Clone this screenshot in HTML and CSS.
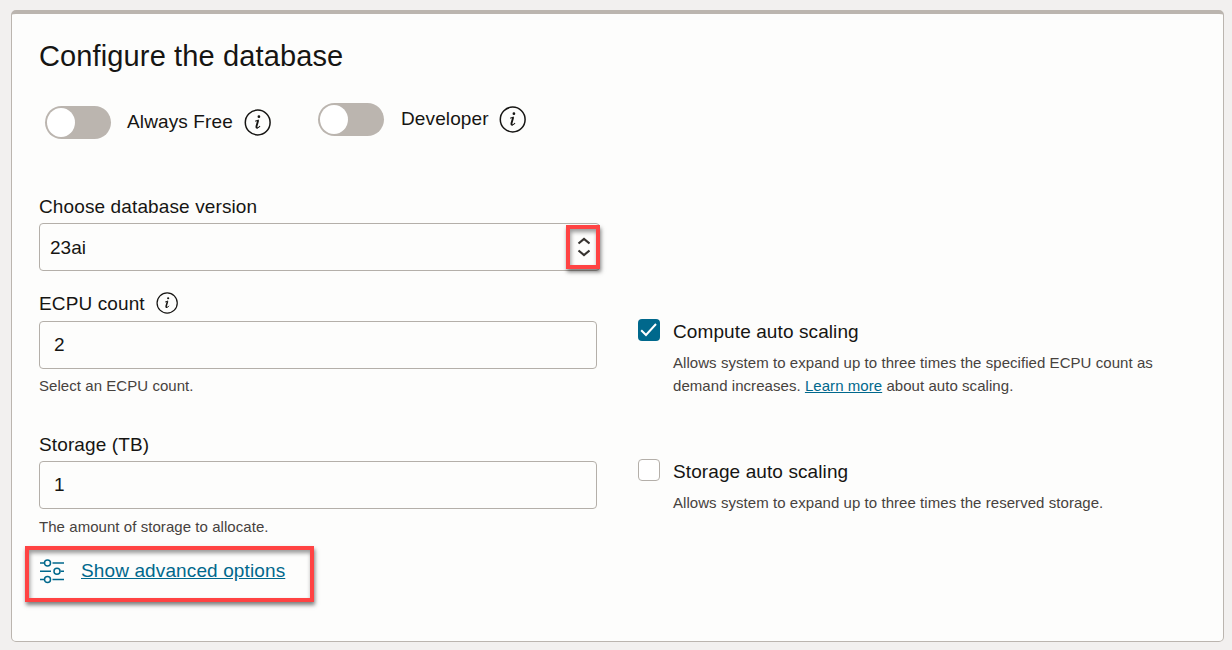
FILE: index.html
```html
<!DOCTYPE html>
<html lang="en">
<head>
<meta charset="utf-8">
<title>Configure the database</title>
<link rel="stylesheet" href="styles.css">
</head>
<body>
<svg class="defs" width="0" height="0" aria-hidden="true">
  <symbol id="info" viewBox="0 0 27 27">
    <circle cx="13.7" cy="13.5" r="12.4" fill="none" stroke="currentColor" stroke-width="1.5"/>
    <circle cx="14.900" cy="7.700" r="1.350" fill="currentColor"/>
    <path d="M11.200 12.300 14.800 11" fill="none" stroke="currentColor" stroke-width="1.1"/>
    <path d="M14.200 11.300 12.500 17.200C12.200 18.600 12.700 18.900 13.600 18.600" fill="none" stroke="currentColor" stroke-width="1.900"/>
    <path d="M13.200 18.900C14.400 18.800 15.300 18 16 17" fill="none" stroke="currentColor" stroke-width="1.1"/>
  </symbol>
</svg>
<main class="card">
  <h1 class="title">Configure the database</h1>
  <div class="toggles">
    <div class="toggle-item toggle-item-free">
      <span class="toggle" role="switch" aria-checked="false"><span class="knob"></span></span>
      <span class="toggle-label toggle-label-free">Always Free</span>
      <svg class="info"><use href="#info"/></svg>
    </div>
    <div class="toggle-item">
      <span class="toggle" role="switch" aria-checked="false"><span class="knob"></span></span>
      <span class="toggle-label">Developer</span>
      <svg class="info"><use href="#info"/></svg>
    </div>
  </div>
  <div class="columns">
    <section class="fields">
      <div class="label label-version">Choose database version</div>
      <div class="select">
        <span class="value">23ai</span>
        <span class="highlight stepper">
          <svg width="14" height="22" viewBox="0 0 14 22" fill="none" stroke="#36322f" stroke-width="2.2"><path d="M2.500 7.500 8 3l5.500 4.500M2.500 14.500 8 19l5.500-4.500"/></svg>
        </span>
      </div>
      <div class="label label-ecpu"><span class="value">ECPU count</span><svg class="info info-small"><use href="#info"/></svg></div>
      <div class="input">2</div>
      <div class="help help-ecpu">Select an ECPU count.</div>
      <div class="label label-storage">Storage (TB)</div>
      <div class="input">1</div>
      <div class="help help-storage">The amount of storage to allocate.</div>
      <div class="highlight advanced">
        <svg width="24" height="25" viewBox="0 0 24 25" fill="none" stroke="#00688c" stroke-width="1.5"><path d="M0 4H4.500M12.500 4H24M0 12.250H11M20.500 12.250H24M0 20.500H4.500M12.500 20.500H24"/><circle cx="7.500" cy="4" r="3"/><circle cx="17" cy="12.250" r="3"/><circle cx="7.500" cy="20.500" r="3"/></svg>
        <a class="link advanced-link">Show advanced options</a>
      </div>
    </section>
    <section class="options">
      <div class="option option-compute">
        <span class="checkbox checked"><svg width="22" height="22" viewBox="0 0 22 22" fill="none" stroke="#fff" stroke-width="2"><path d="M3.200 11.200 8 16 18 5"/></svg></span>
        <div>
          <div class="label option-title">Compute auto scaling</div>
          <div class="help option-text">Allows system to expand up to three times the specified ECPU count as<br>demand increases. <a class="link">Learn more</a> about auto scaling.</div>
        </div>
      </div>
      <div class="option">
        <span class="checkbox"></span>
        <div>
          <div class="label option-title">Storage auto scaling</div>
          <div class="help option-text">Allows system to expand up to three times the reserved storage.</div>
        </div>
      </div>
    </section>
  </div>
</main>
</body>
</html>
```

FILE: styles.css
```css
* { box-sizing: border-box; }
body {
  margin: 0;
  padding: 10px 8px 8px 11px;
  background: #f2f0ef;
  color: #161513;
  font: 19px/24px "Liberation Sans", Arial, sans-serif;
}
.defs { position: absolute; }
.card {
  height: 632px;
  padding: 26px 26px 0 27px;
  background: #fdfdfc;
  border: 1px solid #bbb5af;
  border-top-width: 4px;
  border-radius: 5px;
}
.title { margin: 0; font-size: 29px; font-weight: 400; line-height: 32px; letter-spacing: 0.13px; }
.toggles { display: flex; align-items: flex-start; margin: 31px 0 0 6px; height: 36px; }
.toggle-item { display: flex; align-items: flex-start; width: 273px; }
.toggle-item-free { padding-top: 3px; }
.toggle { width: 66px; height: 33px; padding: 2px; border-radius: 17px; background: #bbb5af; }
.knob { display: block; width: 28px; height: 29px; border-radius: 50%; background: #fff; }
.toggle-label { width: 98px; margin: 4px 0 0 17px; white-space: nowrap; letter-spacing: 0.12px; }
.toggle-label-free { width: 117px; margin-left: 16px; }
.info { width: 27px; height: 27px; margin-top: 3px; }
.info-small { width: 22px; height: 22px; margin: 0; }
.columns { display: grid; grid-template-columns: 599px 1fr; margin-top: 56px; }
.label { height: 24px; white-space: nowrap; letter-spacing: 0.12px; }
.label-ecpu { display: flex; align-items: center; gap: 11px; margin-top: 20px; }
.label-storage { margin-top: 36px; }
.value { padding-top: 2px; }
.select, .input {
  display: flex;
  align-items: center;
  width: 558px;
  height: 48px;
  padding-left: 14px;
  border: 1px solid #b4afa9;
  border-radius: 4px;
}
.select { justify-content: space-between; width: 561px; padding-left: 10px; margin-top: 4px; }
.label-ecpu + .input { margin-top: 6px; }
.label-storage + .input { margin-top: 4px; }
.highlight { border: 4px solid #ff4343; box-shadow: 1px 3px 4px rgba(0,0,0,.5), inset 1px 3px 4px rgba(0,0,0,.4); }
.stepper { display: flex; align-items: center; justify-content: center; width: 34px; height: 44px; margin-right: -1px; }
.help { color: #47423e; font-size: 15px; line-height: 23px; white-space: nowrap; letter-spacing: 0.055px; }
.help-ecpu { margin-top: 5px; }
.help-storage { margin-top: 6px; }
.link { color: #00688c; text-decoration: underline; }
.advanced { display: flex; align-items: flex-start; gap: 17px; width: 289px; height: 56px; margin: 8px 0 0 -14px; padding: 9px 0 0 11px; }
.advanced-link { white-space: nowrap; letter-spacing: 0.12px; }
.options { padding-top: 124px; }
.option { display: flex; gap: 13px; }
.option-compute { height: 140px; }
.checkbox { flex: none; width: 22px; height: 22px; border: 1px solid #b4afa9; border-radius: 4px; background: #fff; }
.checked { border: 0; background: #00688c; }
.checked svg { display: block; }
.option-title { margin-top: 1px; letter-spacing: 0.1px; }
.option-text { margin-top: 7px; }
```
